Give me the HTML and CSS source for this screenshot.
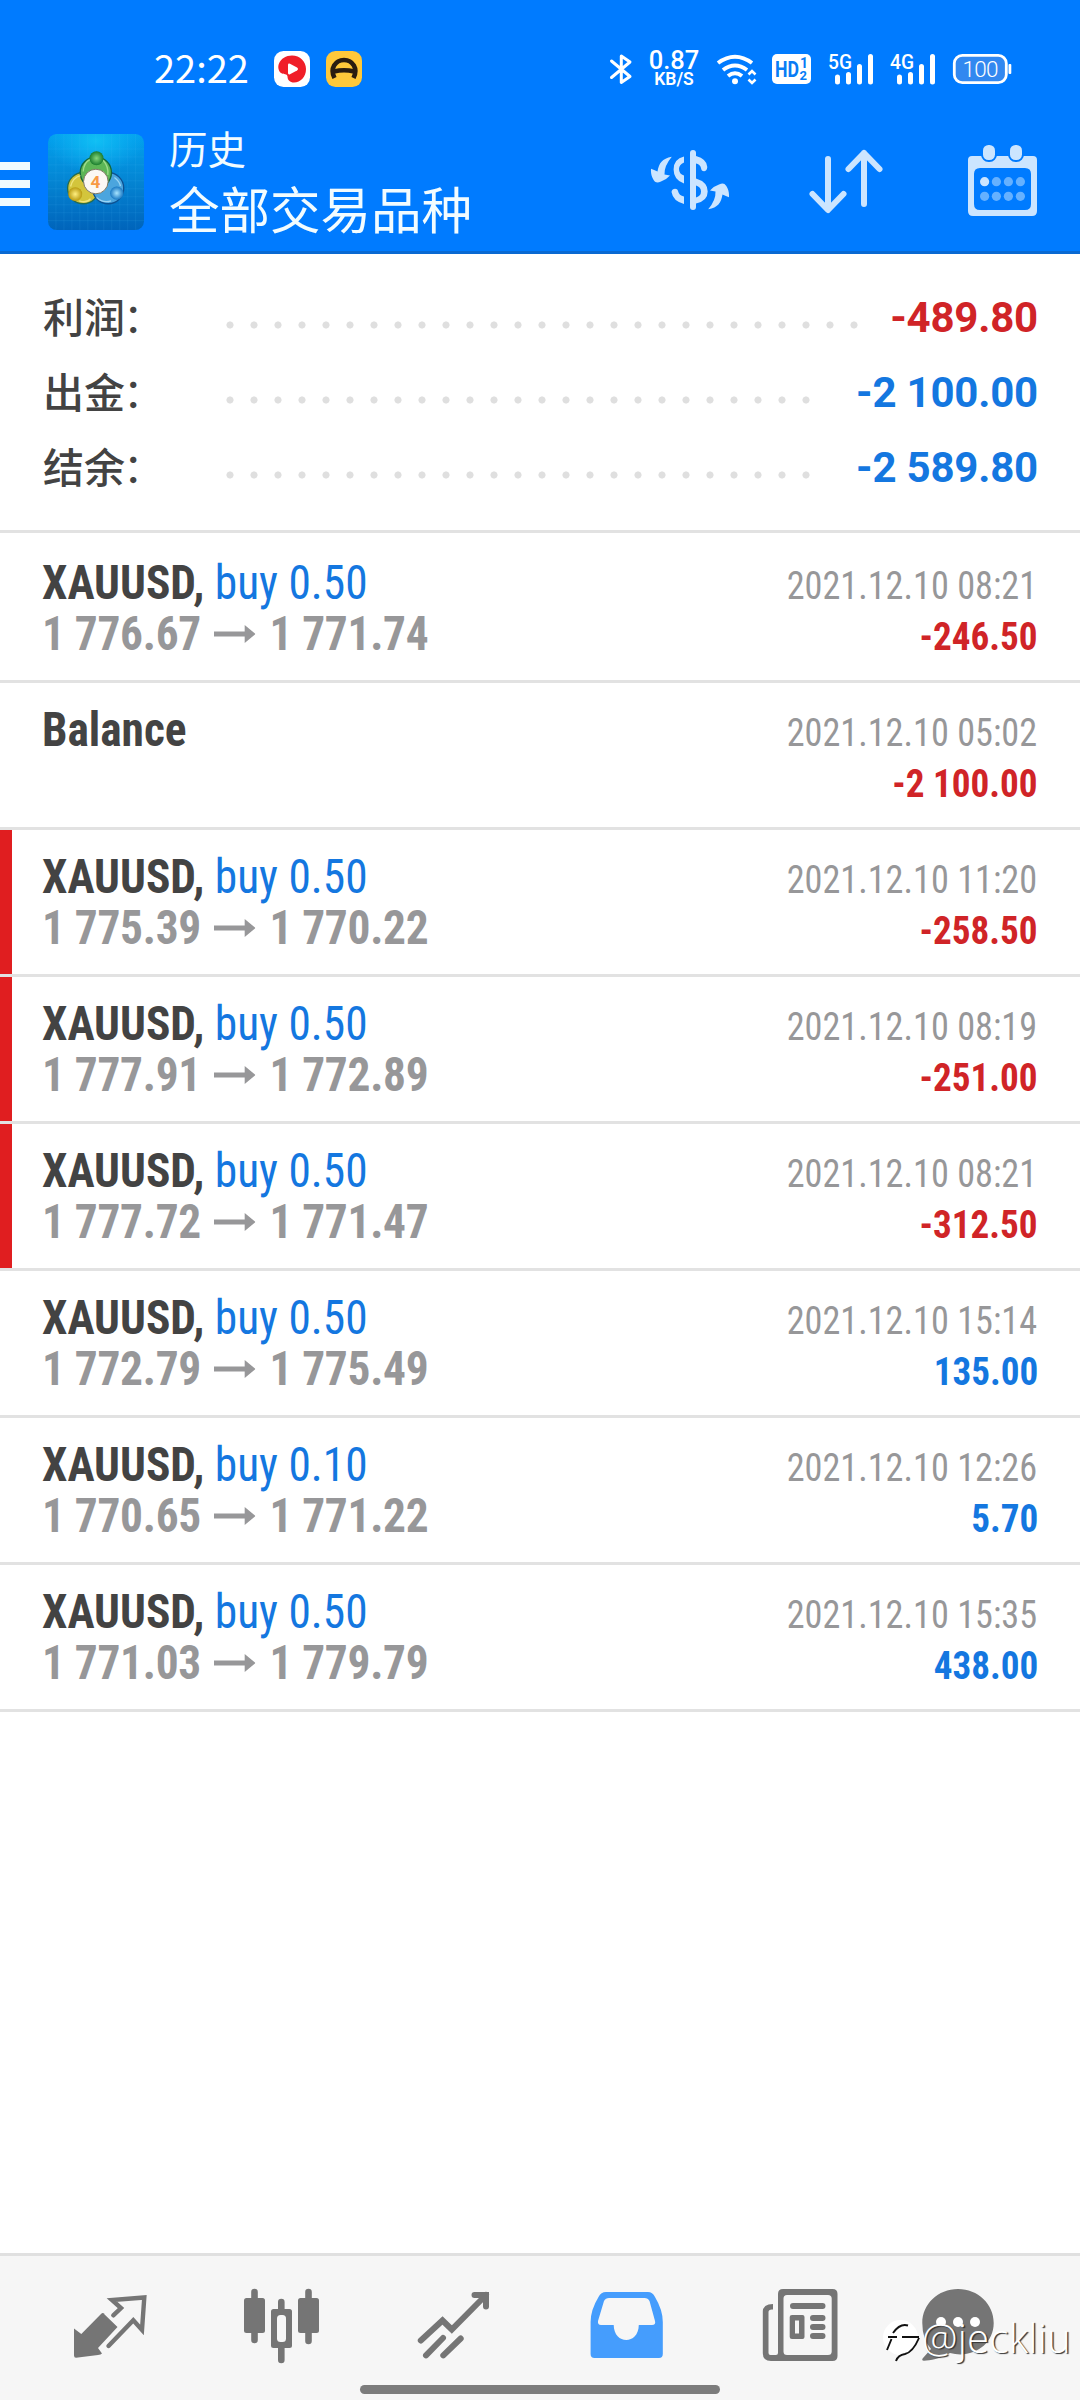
FILE: index.html
```html
<!DOCTYPE html>
<html lang="zh-CN">
<head>
<meta charset="utf-8">
<title>历史</title>
<link rel="stylesheet" href="styles.css">
</head>
<body>
<div class="screen">
  <header class="top">
    <div class="status">
      <span class="clock">22:22</span>
      <svg class="app" viewBox="0 0 36 36"><rect width="36" height="36" rx="9.500" fill="#fff"/><path d="M18 4.500C26 4.500 32 10.500 32 18C32 26 26.500 31.500 20 31.500C16 31.500 13.500 29 13.500 25.500C13 22 10 24 7 22C4.500 20 3.500 16 5 12.500C7 7.500 12 4.500 18 4.500Z" fill="#f01e28"/><path d="M14 14Q14 12 16 12.700L23 16.500Q25 18 23 19.500L16 23.300Q14 24 14 22Z" fill="#fff"/></svg>
      <svg class="app" viewBox="0 0 36 36"><rect width="36" height="36" rx="9.500" fill="#ffc83a"/><path d="M8.500 27C3.500 17.500 9.500 9 18 9S32.500 17.500 27.500 27M8 20.500Q18 18 28 20.500" fill="none" stroke="#2a1c10" stroke-width="4.600"/></svg>
      <div class="indicators">
        <svg width="38" height="50" viewBox="606 44 38 50"><path d="M611.500 61L630 76.500L621.300 82.500V56L630 62L611.500 77.500" fill="none" stroke="#fff" stroke-width="3" stroke-linejoin="round" stroke-linecap="round"/></svg>
        <div class="speed"><span>0.87</span><small>KB/S</small></div>
        <svg width="58" height="50" viewBox="714 44 58 50"><g fill="none" stroke="#fff" stroke-width="4"><path d="M718 63Q735 50.500 752 63M723 70Q735 61 747 70M728 76Q735 70.500 742 76"/><path d="M748.500 74.500L752 71L755.500 74.500M748.500 79.500L752 83L755.500 79.500" stroke-width="2.600"/></g><circle cx="735" cy="81.300" r="3"/></svg>
        <svg width="55" height="50" viewBox="772 44 55 50"><rect x="772" y="54" width="39" height="30" rx="5"/><g fill="#087cf5" font-weight="700"><text x="775" y="76.500" font-size="21.500" textLength="24" lengthAdjust="spacingAndGlyphs">HD</text><text x="800" y="68" font-size="14">1</text><text x="799.500" y="79.500" font-size="13">2</text></g></svg>
        <svg width="62" height="50" viewBox="827 44 62 50"><text x="828" y="69" font-size="20" font-weight="500" textLength="24" lengthAdjust="spacingAndGlyphs">5G</text><path d="M837.500 77V82M848.500 74.500V82M859.500 66.500V82M870.500 56.500V82" stroke="#fff" stroke-width="5" stroke-linecap="round"/></svg>
        <svg width="63" height="50" viewBox="889 44 63 50"><text x="890" y="69" font-size="20" font-weight="500" textLength="24" lengthAdjust="spacingAndGlyphs">4G</text><path d="M899.500 77V82M910.500 74.500V82M921.500 66.500V82M932.500 56.500V82" stroke="#fff" stroke-width="5" stroke-linecap="round"/></svg>
        <svg width="60" height="50" viewBox="952 44 60 50"><rect x="954.300" y="55.300" width="52" height="27.400" rx="8" fill="#3288f0" stroke="#fff" stroke-width="2.800"/><rect x="1008.500" y="64" width="2.800" height="10" rx="1"/><text x="962.500" y="77" font-size="22.500" font-weight="300" textLength="36">100</text></svg>
      </div>
    </div>
    <div class="bar">
      <div class="menu"><i></i><i></i><i></i></div>
      <svg class="logo" viewBox="24 27 289 289">
        <defs>
          <linearGradient id="bg" x2="0" y2="1"><stop offset="0" stop-color="#02a2ee"/><stop offset=".5" stop-color="#0484d2"/><stop offset="1" stop-color="#0064bb"/></linearGradient>
          <radialGradient id="glow" cy="0.100"><stop offset="0" stop-color="#10c0f4"/><stop offset="1" stop-color="#10b4f4" stop-opacity="0"/></radialGradient>
          <radialGradient id="gr"><stop offset="0" stop-color="#86d77c"/><stop offset="1" stop-color="#1b7d2e"/></radialGradient>
          <radialGradient id="ye"><stop offset="0" stop-color="#ffef80"/><stop offset="1" stop-color="#b89a10"/></radialGradient>
          <radialGradient id="bl"><stop offset="0" stop-color="#a8e4ff"/><stop offset="1" stop-color="#1878c4"/></radialGradient>
        </defs>
        <rect x="24" y="27" width="289" height="289" rx="26" fill="url(#bg)"/>
        <rect x="24" y="27" width="289" height="200" rx="26" fill="url(#glow)"/>
        <path d="M48 27V316M72 27V316M96 27V316M120 27V316M144 27V316M168 27V316M192 27V316M216 27V316M240 27V316M264 27V316M288 27V316M24 72H313M24 96H313M24 120H313M24 144H313M24 168H313M24 192H313M24 216H313M24 240H313M24 264H313M24 288H313" stroke="#5cc8ff" stroke-opacity=".16" stroke-width="2"/>
        <g stroke-width="4">
          <circle cx="130" cy="190" r="47" fill="#d3c53c" stroke="#256b50"/>
          <circle cx="205" cy="190" r="47" fill="#4ba5de" stroke="#0d5192"/>
          <circle cx="168" cy="143" r="47" fill="#5db656" stroke="#14663c"/>
        </g>
        <g fill="none" stroke-width="4" stroke-opacity=".65"><path d="M92 185Q98 158 122 152M118 228Q140 236 152 222" stroke="#fff6a0"/><path d="M130 140Q132 112 150 104M204 150Q207 125 190 106" stroke="#c2f0a8"/><path d="M224 158Q240 170 242 184M170 218Q190 236 214 228" stroke="#c4ecff"/></g>
        <circle cx="170" cy="100" r="21" fill="url(#gr)"/><circle cx="106" cy="208" r="21" fill="url(#ye)"/><circle cx="231" cy="205" r="20" fill="url(#bl)"/>
        <circle cx="168" cy="170" r="37" fill="#fbf8f4" stroke="#7d7764" stroke-width="3"/>
        <text x="167" y="190" class="four" text-anchor="middle">4</text>
      </svg>
      <div class="titles"><div class="sub">历史</div><div class="main">全部交易品种</div></div>
      <div class="actions">
        <svg width="84" height="80" viewBox="648 140 84 80"><rect x="690" y="150" width="6" height="60" rx="3"/><path d="M684 156.500Q673.600 159 673.600 169.500Q673.600 180 684 183.500V175.500Q679 174 679 169Q679 164.500 684 162.500ZM696 156Q707 159 707.300 167C707 173 701 172 701 168Q700 164 696 163.500ZM696 178.500Q707.700 182 707.700 191.500Q707.700 201 696 203.500V197.500Q701 196 701 191.500Q701 187 696 185.500ZM671.500 192C672 188 677.500 188 678 191Q679 195.500 684 196.500V204Q673 201 671.500 192Z"/><g><path id="swirl" d="M671.800 156.700C662 158.500 659 163 657.500 171.500Q654 170 651 168.700C650.500 175 653 180 655.500 182Q657.500 183 661 181.500Q666 180 670 175.500L664.500 174.500Q664 166 671.800 156.700Z"/><use href="#swirl" transform="rotate(180 690 183)"/></g></svg>
        <svg width="84" height="80" viewBox="804 140 84 80"><path d="M828 159V209M812.500 194L828 210L843.500 194M864 204V153M848.500 169L864 153L879.500 169" fill="none" stroke="#cce5ff" stroke-width="6" stroke-linecap="round" stroke-linejoin="round"/></svg>
        <svg width="84" height="80" viewBox="960 140 84 80"><path fill-rule="evenodd" d="M972 156H1033Q1037 156 1037 160V211Q1037 216 1032 216H973Q968 216 968 211V160Q968 156 972 156ZM980 168Q974 168 974 174V204Q974 210 980 210H1025Q1031 210 1031 204V174Q1031 168 1025 168Z"/><g stroke="#007bff" stroke-width="4" paint-order="stroke"><rect x="983" y="145" width="12" height="15" rx="5.500"/><rect x="1010" y="145" width="12" height="15" rx="5.500"/></g><g fill="#66b1ff"><circle cx="984.600" cy="181.700" r="4.600" fill="#cce5ff"/><circle cx="996.400" cy="181.700" r="4.600"/><circle cx="1008.400" cy="181.700" r="4.600"/><circle cx="1020.400" cy="181.700" r="4.600"/><circle cx="984.600" cy="196.300" r="4.600"/><circle cx="996.400" cy="196.300" r="4.600"/><circle cx="1008.400" cy="196.300" r="4.600"/><circle cx="1020.400" cy="196.300" r="4.600"/></g></svg>
      </div>
    </div>
  </header>

  <section class="summary">
    <div class="total"><span class="label">利润<i>：</i></span><span class="dots long"></span><b class="neg">-489.80</b></div>
    <div class="total"><span class="label">出金<i>：</i></span><span class="dots"></span><b class="pos">-2 100.00</b></div>
    <div class="total"><span class="label">结余<i>：</i></span><span class="dots"></span><b class="pos">-2 589.80</b></div>
  </section>

  <svg width="0" height="0"><symbol id="arrow" viewBox="0 0 42 18" preserveAspectRatio="none"><path d="M0 6.500H31V0L42 9L31 18V11.500H0Z"/></symbol></svg>

  <main class="deals">
    <div class="deal"><div class="left"><div><b>XAUUSD,</b> <span class="side">buy 0.50</span></div><div class="price">1 776.67<svg><use href="#arrow"/></svg>1 771.74</div></div><div class="right"><time>2021.12.10 08:21</time><b class="neg">-246.50</b></div></div>
    <div class="deal"><div class="left"><div><b>Balance</b></div></div><div class="right"><time>2021.12.10 05:02</time><b class="neg">-2 100.00</b></div></div>
    <div class="deal stop"><div class="left"><div><b>XAUUSD,</b> <span class="side">buy 0.50</span></div><div class="price">1 775.39<svg><use href="#arrow"/></svg>1 770.22</div></div><div class="right"><time>2021.12.10 11:20</time><b class="neg">-258.50</b></div></div>
    <div class="deal stop"><div class="left"><div><b>XAUUSD,</b> <span class="side">buy 0.50</span></div><div class="price">1 777.91<svg><use href="#arrow"/></svg>1 772.89</div></div><div class="right"><time>2021.12.10 08:19</time><b class="neg">-251.00</b></div></div>
    <div class="deal stop"><div class="left"><div><b>XAUUSD,</b> <span class="side">buy 0.50</span></div><div class="price">1 777.72<svg><use href="#arrow"/></svg>1 771.47</div></div><div class="right"><time>2021.12.10 08:21</time><b class="neg">-312.50</b></div></div>
    <div class="deal"><div class="left"><div><b>XAUUSD,</b> <span class="side">buy 0.50</span></div><div class="price">1 772.79<svg><use href="#arrow"/></svg>1 775.49</div></div><div class="right"><time>2021.12.10 15:14</time><b class="pos">135.00</b></div></div>
    <div class="deal"><div class="left"><div><b>XAUUSD,</b> <span class="side">buy 0.10</span></div><div class="price">1 770.65<svg><use href="#arrow"/></svg>1 771.22</div></div><div class="right"><time>2021.12.10 12:26</time><b class="pos">5.70</b></div></div>
    <div class="deal"><div class="left"><div><b>XAUUSD,</b> <span class="side">buy 0.50</span></div><div class="price">1 771.03<svg><use href="#arrow"/></svg>1 779.79</div></div><div class="right"><time>2021.12.10 15:35</time><b class="pos">438.00</b></div></div>
  </main>

  <nav class="tabs">
    <svg viewBox="24 2256 172 144"><path d="M103 2313L117.500 2327L98 2348L102 2353.500Q101 2354.500 98 2355L76 2357.800Q74 2357.800 74 2355.500V2328.500L81.300 2334L101 2314Q103 2312 105 2314.500Z"/><path d="M113.300 2315.300L121 2308L112 2300L144.300 2297.500L142 2330L133.300 2320.300L108.500 2346" fill="none" stroke="#757575" stroke-width="4.400" stroke-linecap="round"/></svg>
    <svg viewBox="196 2256 172 144"><path d="M254.500 2292V2340M281.300 2302V2360M308.500 2292V2341" stroke="#757575" stroke-width="6.600" stroke-linecap="round"/><rect x="244" y="2298" width="21" height="35" rx="2.500"/><rect x="271" y="2309" width="21" height="39" rx="2.500"/><rect x="298" y="2298" width="21" height="35" rx="2.500"/><rect x="277" y="2315" width="9" height="27" rx="3.500" fill="#f7f7f7"/></svg>
    <svg viewBox="368 2256 172 144"><path d="M420.800 2340.500L442.500 2320.500L451.800 2329.500L486 2295M474.500 2295H486V2306.500M443 2338L426 2355.300M460.700 2338.500L443.300 2355.300" fill="none" stroke="#757575" stroke-width="6" stroke-linecap="round"/></svg>
    <svg viewBox="540 2256 172 144"><path fill="#459dfd" fill-rule="evenodd" d="M606 2292H648Q652.500 2292 655 2297Q662.800 2310 662.800 2322V2354Q662.800 2358 659 2358H594.500Q590.600 2358 590.600 2354V2322Q590.600 2310 598.500 2297Q601 2292 606 2292ZM609 2298Q605.500 2298 604 2301L598 2321Q597.500 2325 601 2325H613.700C614 2345 638.500 2345 638.800 2325H652Q656 2325 655 2321L649.500 2301Q648 2298 644.500 2298Z"/></svg>
    <svg viewBox="712 2256 172 144"><path fill-rule="evenodd" d="M783 2289H832.500Q837.500 2289 837.500 2294V2356Q837.500 2361 832.500 2361H771Q762.800 2361 762.800 2353V2312Q762.800 2304 773 2304V2309.500Q768.500 2309 768.500 2312V2353Q768.500 2355 770.500 2355H776Q778 2355 778 2353V2294Q778 2289 783 2289ZM787 2295Q783.500 2295 783.500 2298.500V2351.500Q783.500 2355 787 2355H828Q831.700 2355 831.700 2351.500V2298.500Q831.700 2295 828 2295Z"/><path d="M793 2306H822.500M813 2318H822.500M813 2327H822.500M813 2336H822.500" stroke="#757575" stroke-width="6" stroke-linecap="round"/><path fill-rule="evenodd" d="M792 2315H802.500Q804.500 2315 804.500 2317V2337Q804.500 2339 802.500 2339H792Q789.700 2339 789.700 2337V2317Q789.700 2315 792 2315ZM795 2320.500V2333.500H799V2320.500Z"/></svg>
    <svg viewBox="884 2256 172 144"><path d="M958 2289C978 2289 993.700 2304 993.700 2323C993.700 2345 972 2359 950 2353C940 2359 930 2360.500 924 2360.700Q921 2360.500 923 2358L931 2349Q922.300 2339 922.300 2323C922.300 2304 938 2289 958 2289Z"/><g fill="#fff"><circle cx="941" cy="2322" r="5"/><circle cx="958" cy="2322" r="5"/><circle cx="975" cy="2322" r="5"/></g></svg>
  </nav>
  <div class="home"></div>
  <div class="watermark">
    <svg width="40" height="46" viewBox="882 2316 40 46"><circle cx="900.500" cy="2337.500" r="17.500" fill="#fff"/><path d="M888 2337H897M902 2337H919M891.500 2339L887 2350M893 2333Q900 2323 908 2325.500M919 2338Q913 2352 905 2354Q898 2355 896 2361" fill="none" stroke="#111" stroke-width="1.900"/></svg><span>@jeckliu</span>
  </div>
</div>
</body>
</html>
```
FILE: styles.css
```css
* { box-sizing: border-box; }
body { margin: 0; background: #fff; font-family: Roboto, "Noto Sans CJK SC", sans-serif; color: #434343; }
svg { display: block; flex: none; }
.screen { position: relative; width: 1080px; height: 2400px; display: flex; flex-direction: column; overflow: hidden; }
.screen > * { flex-shrink: 0; }

.top { height: 254px; background: #007bff; border-bottom: 3px solid #0a69d2; color: #fff; }
.status { height: 107px; padding: 31px 68px 0 154px; display: flex; align-items: center; }
.clock { width: 120px; margin-top: -5px; font: 400 38px/50px "Noto Sans CJK SC", sans-serif; white-space: nowrap; }
.app { width: 36px; height: 36px; margin-right: 16px; }
.indicators { margin-left: auto; display: flex; align-items: center; fill: #fff; font-family: Roboto, sans-serif; }
.speed { width: 70px; padding-right: 10px; display: flex; flex-direction: column; align-items: center; font-weight: 500; }
.speed span { font-size: 25.500px; line-height: 20px; }
.speed small { font-size: 17.500px; line-height: 18px; font-weight: 600; }

.bar { height: 144px; padding-right: 36px; display: flex; align-items: center; }
.menu { width: 48px; display: flex; flex-direction: column; gap: 10px; padding-top: 10px; }
.menu i { width: 30px; height: 8px; background: #f0fbff; }
.logo { width: 96px; height: 96px; margin-top: 6px; }
.four { font: 700 52px Roboto, sans-serif; fill: #f79a45; }
.titles { margin: -3px 0 0 25px; font-family: "Noto Sans CJK SC", sans-serif; color: #f2fcff; }
.sub { font-size: 38.5px; line-height: 58px; }
.main { font-size: 50.5px; line-height: 62px; }
.actions { margin-left: auto; padding-top: 2px; display: flex; gap: 72px; fill: #cce5ff; }

.summary { height: 279px; padding: 27px 43px 0; border-bottom: 3px solid #e2e2e2; }
.total { height: 75px; display: flex; align-items: center; }
.label { width: 175px; margin-top: -7px; font: 500 41px/75px "Noto Sans CJK SC", sans-serif; }
.label i { margin-left: -2px; font-style: normal; font-weight: 400; }
.dots { width: 600px; height: 10px; margin-top: 13px; background: radial-gradient(circle at 12px 5px, #dfdfdf 3.2px, transparent 3.9px) 0 0 / 24px 10px; }
.dots.long { width: 648px; }
.total b { margin: -2px -1px 0 auto; font-size: 42px; letter-spacing: -0.2px; }
.neg { color: #d02427; }
.pos { color: #1477e0; }

.deals { padding-top: 3px; font-size: 48px; font-stretch: 75%; line-height: 51px; white-space: nowrap; }
.deal { height: 147px; padding: 0 43px 0 42px; border-bottom: 3px solid #e2e2e2; display: flex; justify-content: space-between; }
.stop { background: linear-gradient(#e01e20, #e01e20) 0 0 / 12px 144px no-repeat; }
.left { padding-top: 21px; transform: scaleX(.945); transform-origin: left; }
.side { color: #1477e0; }
.price { display: flex; align-items: center; color: #979799; font-weight: 700; letter-spacing: -0.3px; }
.price svg { width: 44px; height: 18px; margin: 0 15px 0 13.5px; fill: #979799; }
.right { padding-top: 24px; font-size: 39.500px; display: flex; flex-direction: column; align-items: flex-end; }
.right time { color: #979799; transform: scaleX(.917); transform-origin: right; }
.right b { margin-right: -1px; transform: scaleX(.94); transform-origin: right; }

.tabs { margin-top: auto; height: 147px; padding: 0 24px; border-top: 3px solid #e0e0e0; background: #f6f6f6; display: flex; fill: #757575; }
.tabs svg { width: 172px; height: 144px; }
.home { position: absolute; left: 360px; top: 2385px; width: 360px; height: 9px; border-radius: 5px; background: #7c7c7c; }
.watermark { position: absolute; left: 882px; top: 2316px; display: flex; }
.watermark span { font: 300 40px/43px "Open Sans", sans-serif; letter-spacing: 0.3px; color: #fff; text-shadow: 1.5px 1px 1px #333; }
```
